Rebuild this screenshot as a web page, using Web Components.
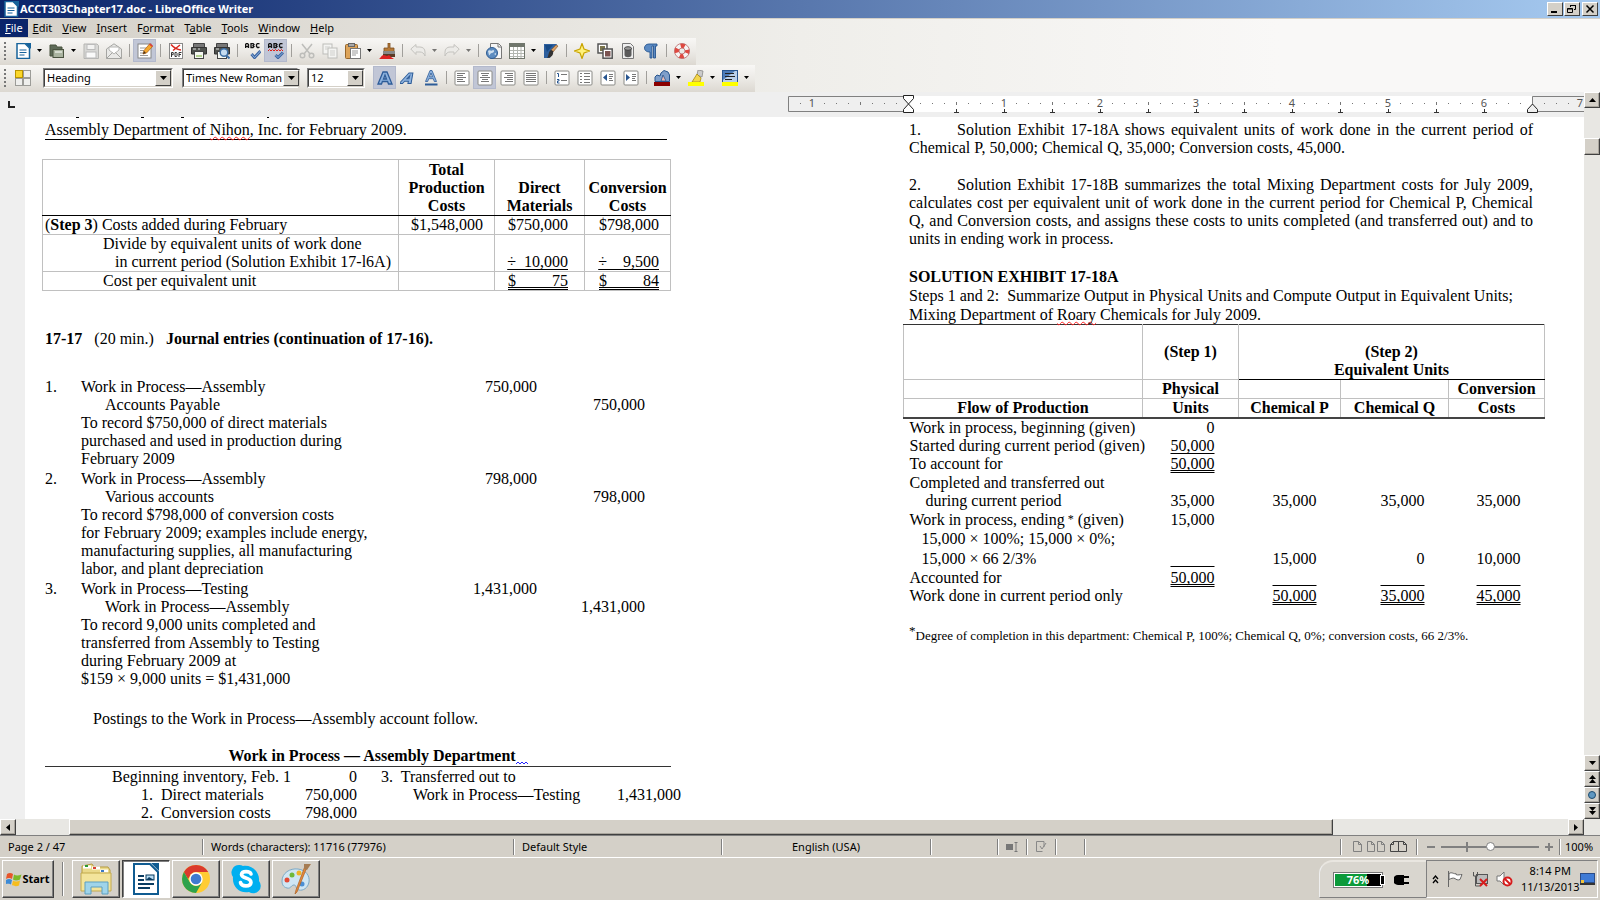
<!DOCTYPE html>
<html lang="en">
<head>
<meta charset="utf-8">
<title>ACCT303Chapter17.doc - LibreOffice Writer</title>
<style>
html,body{height:100%;margin:0}
body{font:11px/14px "Noto Sans","Open Sans",sans-serif;color:#000;overflow:hidden}
</style>
</head>
<body>
<writer-app></writer-app>
<script>
const define=(name,html,setup)=>{
  const t=document.createElement('template');
  t.innerHTML=html;
  customElements.define(name,class extends HTMLElement{
    constructor(){super();this.attachShadow({mode:'open'}).append(t.content.cloneNode(true));}
    connectedCallback(){if(setup&&!this.ready){this.ready=true;setup(this,this.shadowRoot);}}
  });
};

/* ---------- icons, all on a 16 x 16 grid ---------- */
const box='<rect x="1" y="1" width="14" height="14" rx="1" fill="#fff" stroke="#8a8a86"/>';
const lines=(a)=>a.map(([x,y,w])=>`<path d="M${x} ${y}.5h${w}" stroke="#777"/>`).join('');
const letterA='M1 14 6 2h4l5 12h-3.500l-.9-2.500H5.400L4.500 14ZM6.500 9h3L8 5Z';
const ICONS={
  doc:'<path d="M2 .5h8L14.500 5v10.500H2Z" fill="#fff" stroke="#17639b" stroke-width="1.500"/><path d="M10 0h6v6Z" fill="#17639b"/><path d="M4.500 7h7M4.500 9.500h7M4.500 12h5" stroke="#17639b" stroke-width="1.200"/>',
  open:'<path d="M1 2h6l1 2h5v9H1Z" fill="#5d6a57" stroke="#49523f"/><rect x="4" y="6.500" width="10.500" height="8" fill="#a9b39f" stroke="#49523f"/><path d="M6 9h7" stroke="#e4e8df" stroke-width="1.500"/>',
  save:'<path d="M1 1h13l1.500 1.500v13H1Z" fill="#d8d8d6" stroke="#b5b5b2"/><rect x="4" y="1.500" width="8" height="5" fill="#f3f3f2" stroke="#bbb"/><rect x="3" y="9" width="10" height="6" fill="#fafafa" stroke="#bbb"/>',
  mail:'<path d="M.5 6 8 .8 15.500 6v9.500H.5Z" fill="#e9e9e7" stroke="#a5a5a2"/><path d="M3 7V4h10v3L8 11Z" fill="#fff" stroke="#b5b5b2"/><path d="m.5 15.500 6-6M15.500 15.500l-6-6" stroke="#a5a5a2" fill="none"/>',
  edit:'<rect x="1" y="1" width="13" height="14" fill="#fff" stroke="#888"/><path d="M3 5h6M3 7.500h4M3 10h3M3 12.500h8" stroke="#999"/><path d="m6 11 1-3.500L12.500 1 15.500 3.500 9.500 10Z" fill="#f4a72d" stroke="#b3671a" stroke-width=".8"/><path d="m6 11 1-3 2 2Z" fill="#4a3420"/><path d="m12 1.500 1.200-1.200 2.800 2.400-1 1.200Z" fill="#d8413a"/>',
  pdf:'<rect x="1.500" y=".5" width="13" height="15" fill="#fff" stroke="#888"/><path d="M3 1.500C6 5 9 6.500 13 7M12 2 5 7.500" stroke="#d9281e" stroke-width="1.500" fill="none"/><path d="M3.500 14V9.500h1.700v2.200H3.500M7 9.500v4h1.500l.5-.8V10.300l-.5-.8ZM11 14V9.500h2.500M11 11.500h2" stroke="#333" fill="none"/>',
  print:'<path d="M2.500.5h11v4h-11Z" fill="#777" stroke="#444"/><path d="M.5 4.500h15v6.500H.5Z" fill="#4f524e" stroke="#333"/><path d="M2 6h3M7 6h2" stroke="#ddd"/><rect x="3.500" y="8.500" width="9" height="7" fill="#f5f8f2" stroke="#444"/><path d="M5 13h6" stroke="#b2d08e" stroke-width="2"/>',
  preview:'<path d="M2.500.5h11v4h-11Z" fill="#777" stroke="#444"/><path d="M.5 4.500h15v6.500H.5Z" fill="#4f524e" stroke="#333"/><path d="M2 6h3" stroke="#ddd"/><rect x="3.500" y="8.500" width="9" height="7" fill="#f5f8f2" stroke="#444"/><circle cx="10" cy="9.500" r="3.800" fill="#c5dcf0" stroke="#3e6fa5" stroke-width="1.500"/><path d="m12.500 12.500 3 3" stroke="#3e6fa5" stroke-width="2"/>',
  spell:'<g fill="none" stroke="#111" stroke-width="1.300"><path d="M.5 5V1.500L1.500.5h1l1 1V5M.5 3.500h3M6 4.500v-4h2l1 1-1 1 1 1-1 1ZM14.500 1l-1-.5h-1l-1 1v2l1 1h1l1-.5"/></g><path d="m6.500 11 3 3.500L15.500 8" fill="none" stroke="#3b64a2" stroke-width="3"/><path d="m6.500 11 3 3.500L15.500 8" fill="none" stroke="#8fb4de"/>',
  autospell:'<g fill="none" stroke="#111" stroke-width="1.300"><path d="M.5 5V1.500L1.500.5h1l1 1V5M.5 3.500h3M6 4.500v-4h2l1 1-1 1 1 1-1 1ZM14.500 1l-1-.5h-1l-1 1v2l1 1h1l1-.5"/></g><path d="m0 8 1.500-1.500L3 8l1.500-1.500L6 8l1.500-1.500L9 8l1.500-1.500L12 8l1.500-1.500L15 8" fill="none" stroke="#e0201b"/><path d="m7.500 12 2.500 2.500L15 9.500" fill="none" stroke="#3b64a2" stroke-width="3"/><path d="m7.500 12 2.500 2.500L15 9.500" fill="none" stroke="#8fb4de"/>',
  cut:'<g fill="none" stroke="#bdbdba" stroke-width="1.500"><path d="M3 1 11 11M13 1 5 11"/><circle cx="3.500" cy="12.500" r="2.300"/><circle cx="12.500" cy="12.500" r="2.300"/></g>',
  copy:'<g fill="#f4f4f2" stroke="#bdbdba"><rect x="1" y="1" width="9" height="10"/><rect x="6" y="5" width="9" height="10"/></g><path d="M3 4h5M3 6h3M8 8h5M8 10h5M8 12h5" stroke="#cfcfcc"/>',
  paste:'<rect x=".5" y="1.500" width="12" height="14" rx="1" fill="#dda45a" stroke="#96662c"/><rect x="3.500" y=".5" width="6" height="3" fill="#aaa" stroke="#666"/><rect x="5.500" y="5.500" width="10" height="10" fill="#fff" stroke="#777"/><path d="M7 8h6M7 10h6M7 12h4" stroke="#999"/>',
  brush:'<path d="M9 0h2v5h4v4H5V5h4Z" fill="#b57936" stroke="#7d4f20" stroke-width=".8"/><rect x="4" y="8" width="12" height="3" fill="#888"/><path d="M4 11h12v3H4Z" fill="#5a3a25"/><path d="M0 16c2-1 2-4 5-4l3 1 2-1 2 2 3 2Z" fill="#d22"/>',
  undo:'<path d="M.8 6 6 1.500V4h4c3 0 5 2 5 5v4c-1-3-3-4-5-4H6v2.500Z" fill="#ecebe8" stroke="#c4c3bf"/>',
  redo:'<path d="M15.200 6 10 1.500V4H6C3 4 1 6 1 9v4c1-3 3-4 5-4h4v2.500Z" fill="#ecebe8" stroke="#c4c3bf"/>',
  link:'<path d="M4.500.5h8l3 3v12h-11Z" fill="#f6f6f6" stroke="#777"/><path d="M12 1v3h3" fill="none" stroke="#777"/><circle cx="6" cy="10" r="5.500" fill="#5d8cc0" stroke="#2f5c93"/><path d="M2 8c2-2 3 1 5-1 2 0 1 3-1 3s-2 3-3 2ZM8 11l2-1v2Z" fill="#cfe0f0"/>',
  table:'<rect x=".5" y=".5" width="15" height="15" fill="#fff" stroke="#70766c"/><path d="M.5 1h15v3H.5Z" fill="#70766c"/><path d="M1 7.500h14M1 10.500h14M1 13.500h14M4.500 4v11M8.500 4v11M12 4v11" stroke="#b4b7b1"/>',
  draw:'<path d="M1 1h13L7 15H1Z" fill="#2d5f9e"/><path d="M2 2h8L4 9Z" fill="#174a86"/><path d="m15 3-5 6-2-2 5-5Z" fill="#d7a067" stroke="#8a5c30" stroke-width=".7"/><path d="M10 8c1 4-2 7-6 7 2-2 1-6 4-8Z" fill="#333"/>',
  star:'<path d="m8 .5 2 5.500 5.500 2L10 10l-2 5.500L6 10 .5 8 6 6Z" fill="#fff27d" stroke="#c9a400" stroke-width="1.200"/>',
  gallery:'<rect x="1" y="1" width="9" height="9" fill="#fff" stroke="#555" stroke-width="1.500"/><rect x="3" y="3" width="5" height="5" fill="#7a7449"/><rect x="6" y="6" width="9.200" height="9.200" fill="#fff" stroke="#555" stroke-width="1.500"/><rect x="8" y="8" width="5.500" height="5.500" fill="#7b5350"/>',
  data:'<path d="M2.500.5h8l3 3v12h-11Z" fill="#eee" stroke="#777"/><path d="M4.500 5v7c0 3 7 3 7 0V5Z" fill="#5b5b5b"/><ellipse cx="8" cy="5.500" rx="3.500" ry="1.800" fill="#999" stroke="#444"/>',
  pilcrow:'<path d="M14 1v2h-1.500v12h-2V3H9v12H7V9C3 9 1.500 7 1.500 5S3 1 6 1Z" fill="#5b8ac3" stroke="#27558f" stroke-width=".9"/>',
  help:'<circle cx="8" cy="8" r="5.300" fill="none" stroke="#f4f4f4" stroke-width="4.500"/><circle cx="8" cy="8" r="5.300" fill="none" stroke="#e0483f" stroke-width="4.500" stroke-dasharray="4.160" stroke-dashoffset="2"/><circle cx="8" cy="8" r="7.500" fill="none" stroke="#b66" stroke-width=".8"/><circle cx="8" cy="8" r="3" fill="none" stroke="#b66" stroke-width=".8"/>',
  styles:'<g fill="#efefed" stroke="#9c9c98"><rect x=".5" y=".5" width="7" height="7" fill="#fbd72b" stroke="#b99400"/><rect x="8.500" y=".5" width="7" height="7"/><rect x=".5" y="8.500" width="7" height="7"/><rect x="8.500" y="8.500" width="7" height="7"/></g>',
  bold:`<path d="${letterA}" fill="#8db2de" stroke="#2d5c98" stroke-width="1.300"/>`,
  italic:`<path transform="translate(4 0) skewX(-20)" d="M0 13.500 6 3h4l2 10.500H8.800l-.3-2.300H4.700L3.500 13.500ZM6 8.800h2.200L7.800 5.500Z" fill="#8db2de" stroke="#2d5c98"/>`,
  under:'<path d="m2.500 11.500 4.500-11h2l4.500 11h-2.200l-1-2.800H5.700l-1 2.800ZM6.500 6.800h3L8 3Z" fill="#8db2de" stroke="#2d5c98" stroke-width=".8"/><path d="M2 14.500h12.500" stroke="#2d5c98" stroke-width="2"/>',
  left:box+lines([[3,3,8],[3,5,6],[3,7,9],[3,9,6],[3,11,8]]),
  center:box+lines([[4,3,8],[5,5,6],[3,7,10],[5,9,6],[4,11,8]]),
  right:box+lines([[5,3,8],[7,5,6],[4,7,9],[7,9,6],[5,11,8]]),
  justify:box+lines([[3,3,10],[3,5,10],[3,7,10],[3,9,10],[3,11,10]]),
  numbers:box+'<path d="M3 3.500h1.500V7M3 9.500h2v1.500H3.500v2H5.500" fill="none" stroke="#27558f"/>'+lines([[7,4,6],[7,10,6]]),
  bullets:box+'<path d="M3 3.500h2M3 6.500h2M3 9.500h2M3 12.500h2" stroke="#777"/>'+lines([[7,3,6],[7,6,6],[7,9,6],[7,12,6]]),
  outdent:box+'<path d="M7 4v7L3 7.500Z" fill="#27558f"/>'+lines([[9,4,4],[9,6,4],[9,8,3],[9,10,4]]),
  indent:box+'<path d="M3 4v7l4-3.500Z" fill="#27558f"/>'+lines([[9,4,4],[9,6,4],[9,8,3],[9,10,4]]),
  color:'<path d="M1 11.500V7l2-2 3 1 1-3 3-2.500 4 1.500 1.500 3v6.500Z" fill="#7f9fca" stroke="#27558f"/><path d="m7 11 2-6 3 6Z" fill="#e9b9b2" stroke="#27558f" stroke-width=".8"/><path d="M0 12h16v4H0Z" fill="#8b0000"/>',
  mark:'<path d="m10 0 5 1-1 6-5-2Z" fill="#ccc" stroke="#888" stroke-width=".8"/><path d="m9 4 4 4-1 4H4Z" fill="#f3d54d" stroke="#a88a10" stroke-width=".8"/><path d="M0 12h16v4H0Z" fill="#ff0"/>',
  back:'<rect x=".5" y=".5" width="15" height="12" fill="#b9d0ea" stroke="#27558f"/><path d="M1 1h12L1 10Z" fill="#4d7cb8"/><path d="M3 3.500h9M3 6.500h10M3 9.500h7" stroke="#222"/><path d="M0 12h16v4H0Z" fill="#ff0"/>'
};
const svg=(n,s=16)=>`<svg width="${s}" height="${s}" viewBox="0 0 16 16" aria-hidden="true">${ICONS[n]}</svg>`;

/* ---------- title bar ---------- */
define('title-bar',`<style>
:host{display:flex;align-items:center;height:18px;padding:0 2px 0 3px;gap:1px;background:linear-gradient(90deg,#0a246a,#a6caf0);border-bottom:1px solid #d4d0c8;color:#fff}
svg{flex:none}
h1{flex:1;margin:0;font-size:11px;line-height:18px;font-weight:700}
button{box-sizing:border-box;width:16px;height:14px;padding:0;border:1px solid;border-color:#fff #404040 #404040 #fff;background:#d4d0c8;display:grid;place-items:center}
button:last-child{margin-left:1px}
</style>${svg('doc')}<h1><slot></slot></h1>
<button aria-label="Minimize"><svg width="10" height="10"><path d="M1 8h6" stroke="#000" stroke-width="2"/></svg></button>
<button aria-label="Restore"><svg width="10" height="10" fill="none" stroke="#000"><path d="M3.500 3V1.500h5v4H7M3 1.500h6M.5 4.500h5v4h-5ZM.5 5h5"/></svg></button>
<button aria-label="Close"><svg width="10" height="10"><path d="m1.500 1.500 7 7m0-7-7 7" stroke="#000" stroke-width="1.500"/></svg></button>`);

/* ---------- menu ---------- */
define('menu-bar',`<style>
:host{display:block}
nav{display:flex;height:19px}
button{font:inherit;font-size:11px;line-height:18px;height:18px;padding:0 5px;border:0;background:none;color:#000}
button:first-child{background:#0a246a;color:#fff}
u{text-underline-offset:1px}
</style><nav><button><u>F</u>ile</button><button><u>E</u>dit</button><button><u>V</u>iew</button><button><u>I</u>nsert</button><button>F<u>o</u>rmat</button><button>T<u>a</u>ble</button><button><u>T</u>ools</button><button><u>W</u>indow</button><button><u>H</u>elp</button></nav>`);

/* ---------- tool bars ---------- */
define('tool-bar',`<style>
:host{display:flex;width:max-content;align-items:center;height:27px;box-sizing:border-box;padding:0 3px 2px 0;background:linear-gradient(#f8f7f5,#eceae6 50%,#dcd8d1)}
i{width:2px;height:18px;margin:0 5px 0 4px;background:repeating-linear-gradient(#777 0 2px,transparent 2px 4px)}
</style><i></i><slot></slot>`);
define('tool-sep',`<style>:host{width:8px;display:flex;justify-content:center}i{width:1px;height:13px;background:#a19f9b}</style><i></i>`);
define('tool-button',`<style>
:host{display:flex;height:23px}
button{box-sizing:border-box;padding:0;border:0;background:none;display:grid;place-items:center}
.main{width:23px;height:23px}
.more{width:11px;display:none}
:host([pressed]) .main{background:#c1c6d6;border:1px solid #b3b9cc}
:host([menu]) .more{display:grid}
:host([off]) .more{opacity:.5}
</style><button class="main"></button><button class="more" aria-label="More"><svg width="7" height="4"><path d="M1 0h5L3.500 3Z"/></svg></button>`,
(el,root)=>{const b=root.querySelector('.main');b.innerHTML=svg(el.getAttribute('icon'));b.setAttribute('aria-label',el.getAttribute('icon'));});
define('tool-select',`<style>
:host{display:flex;box-sizing:border-box;height:20px;border:1px solid;border-color:#808080 #fff #fff #808080}
label{flex:1;display:flex;position:relative;border:1px solid;border-color:#404040 #d4d0c8 #d4d0c8 #404040}
select{flex:1;min-width:0;appearance:none;border:0;border-radius:0;padding:0 16px 0 2px;background:#fff;font:inherit;font-size:11px;color:#000;outline:0}
span{position:absolute;right:0;top:0;bottom:0;width:14px;border:1px solid;border-color:#fff #404040 #404040 #fff;background:#d4d0c8;display:grid;place-items:center;pointer-events:none}
</style><label><select><option></option></select><span><svg width="7" height="4"><path d="M0 0h7L3.500 4Z"/></svg></span></label>`,
(el,root)=>{root.querySelector('option').textContent=el.getAttribute('value');root.querySelector('select').setAttribute('aria-label',el.getAttribute('label'));});

const T=(s)=>s.split(' ').map(w=>w==='|'?'<tool-sep></tool-sep>':`<tool-button icon="${w.replace(/[*+-]/g,'')}"${w.includes('*')?' pressed':''}${w.includes('+')?' menu':''}${w.includes('-')?' off':''}></tool-button>`).join('');
define('writer-tools',`<style>
:host{display:block;background:linear-gradient(90deg,#d4d0c8,#efeeea 50%,#f9f8f7 80%)}
.style{width:130px;margin:0 9px}.font{width:116px;margin-right:9px}.size{width:58px;margin-right:8px}
</style><menu-bar></menu-bar>
<tool-bar>${T('doc+ open+ save mail | edit* | pdf print preview | spell autospell* | cut copy paste+ brush | undo+- redo+- | link table+ draw | star gallery data pilcrow | help')}</tool-bar>
<tool-bar>${T('styles')}<tool-select class="style" label="Paragraph style" value="Heading"></tool-select><tool-select class="font" label="Font name" value="Times New Roman"></tool-select><tool-select class="size" label="Font size" value="12"></tool-select>${T('bold* italic under | left center* right justify | numbers bullets outdent indent | color+ mark+ back+')}</tool-bar>`);

/* ---------- ruler: one inch is 96px ---------- */
define('page-ruler',`<style>
:host{display:flex;height:25px;background:#efefef;overflow:hidden}
.corner{flex:0 0 788px;box-sizing:border-box;padding:9px 0 0 8px}
.scale{flex:1;min-width:0;overflow:hidden}
svg{display:block}
text{font-size:11px;fill:#555;text-anchor:middle}
</style><div class="corner"><svg width="8" height="8"><path d="M1 0v6h6" fill="none" stroke="#222" stroke-width="2"/></svg></div><div class="scale"></div>`,
(el,root)=>{
  let s='<rect x="120" y="4" width="624" height="16" fill="#fff"/><path d="M120 4.500H.5v15H120M744.500 20V4.500H900M744.500 19.500H900" fill="none" stroke="#808080"/>';
  for(let i=-9;i<=60;i++){
    const x=120+i*12;
    if(i===0||i===52)continue;
    if(i%8===0)s+=`<text x="${x}" y="15">${Math.abs(i/8)}</text>`;
    else if(i%4===0)s+=`<path d="M${x}.5 10v3" stroke="#777"/>`;
    else s+=`<rect x="${x}" y="11" width="1" height="1" fill="#777"/>`;
    if(i>0&&i<52&&i%4===0)s+=`<path d="M${x}.5 17v3M${x-2} 20.500h5" stroke="#333"/>`;
  }
  s+='<g fill="#fff" stroke="#222"><path d="M115.500 3.500h10v3l-5 5.500-5-5.500ZM115.500 20.500h10v-3l-5-5.500-5 5.500Z"/><path d="M739.500 20.500h10v-3l-5-5.500-5 5.500Z" fill="#efefef"/></g>';
  root.querySelector('.scale').innerHTML=`<svg width="900" height="25">${s}</svg>`;
});

/* ---------- scroll bars ---------- */
const btn='box-sizing:border-box;padding:0;border:1px solid;border-color:#fff #404040 #404040 #fff;background:#d4d0c8;display:grid;place-items:center;box-shadow:inset -1px -1px #a9a59d;';
define('scroll-y',`<style>
:host{display:flex;flex-direction:column;width:16px;background:#e8e7e3}
button{${btn}width:16px;height:16px}
.a{flex:30}.b{flex:602}.thumb{${btn}height:17px}
</style><button aria-label="Up"><svg width="7" height="4"><path d="M0 4h7L3.500 0Z"/></svg></button><div class="a"></div><div class="thumb"></div><div class="b"></div>
<button aria-label="Down"><svg width="7" height="4"><path d="M0 0h7L3.500 4Z"/></svg></button>
<button aria-label="Previous page"><svg width="7" height="8"><path d="M0 4h7L3.500 0ZM0 8h7L3.500 4Z"/></svg></button>
<button aria-label="Navigation"><svg width="10" height="10"><circle cx="5" cy="5" r="3.500" fill="#5f97c0" stroke="#1d4c70"/></svg></button>
<button aria-label="Next page"><svg width="7" height="8"><path d="M0 0h7L3.500 4ZM0 4h7L3.500 8Z"/></svg></button>`);
define('scroll-x',`<style>
:host{display:flex;height:16px;padding-right:16px;background:#e8e7e3;border-bottom:1px solid #808080}
button{${btn}width:16px;height:16px}
.a{flex:53}.thumb{${btn}flex:1265}.b{flex:235}
</style><button aria-label="Left"><svg width="4" height="7"><path d="M4 0v7L0 3.500Z"/></svg></button><div class="a"></div><div class="thumb"></div><div class="b"></div><button aria-label="Right"><svg width="4" height="7"><path d="M0 0v7l4-3.500Z"/></svg></button>`);

/* ---------- document ---------- */
const serif='font-family:"Liberation Serif","Times New Roman",serif;font-size:16px;line-height:18px;';
const deco='.u{text-decoration:underline 1px;text-underline-offset:2px;white-space:pre}.d{text-decoration:underline double 1px;text-underline-offset:1px;text-decoration-skip-ink:none;white-space:pre}';
define('cost-table',`<style>
:host{display:block;margin:19px 0 0 -3px}
table{border-collapse:collapse;table-layout:fixed;width:628px}
td,th{border:1px solid #c0c0c0;padding:0;vertical-align:bottom;line-height:18px}
th{border-bottom-color:#000;padding-top:1px}
td:first-child{padding-left:2px}
td:nth-child(2){text-align:right;padding-right:11px}td:nth-child(3){text-align:right;padding-right:16px}td:nth-child(4){text-align:right;padding-right:11px}
p{margin:0 0 0 58px}p+p{margin-left:70px}
.c1{width:356px}.c2{width:96px}.c3{width:90px}.c4{width:86px}
${deco}</style><table><colgroup><col class="c1"><col class="c2"><col class="c3"><col class="c4"></colgroup>
<tr><th></th><th>Total<br>Production<br>Costs</th><th>Direct<br>Materials</th><th>Conversion<br>Costs</th></tr>
<tr><td>(<b>Step 3</b>) Costs added during February</td><td>$1,548,000</td><td>$750,000</td><td>$798,000</td></tr>
<tr><td><p>Divide by equivalent units of work done</p><p>in current period (Solution Exhibit 17-l6A)</p></td><td></td><td><span class="u">÷  10,000</span></td><td><span class="u">÷    9,500</span></td></tr>
<tr><td><p>Cost per equivalent unit</p></td><td></td><td><span class="d">$         75</span></td><td><span class="d">$         84</span></td></tr></table>`);

const entry=(n,a,b,v,note)=>`<tbody><tr><td>${n}.</td><td>${a}</td><td>${v}</td><td></td></tr><tr><td></td><td class="cr">${b}</td><td></td><td>${v}</td></tr><tr><td></td><td class="note">${note}</td><td></td><td></td></tr></tbody>`;
define('journal-entries',`<style>
:host{display:block;margin-top:29px}
table{border-collapse:collapse;table-layout:fixed;width:600px}
td{padding:0;vertical-align:top}
tr:first-child td{line-height:19px}
td:nth-child(n+3){text-align:right}
.cr{padding-left:24px}.note{padding-bottom:1px}tbody:last-child .note{padding-bottom:4px}
.c1{width:36px}.c2{width:336px}.c3{width:120px}.c4{width:108px}
</style><table><colgroup><col class="c1"><col class="c2"><col class="c3"><col class="c4"></colgroup>
${entry(1,'Work in Process—Assembly','Accounts Payable','750,000','To record $750,000 of direct materials<br>purchased and used in production during<br>February 2009')}
${entry(2,'Work in Process—Assembly','Various accounts','798,000','To record $798,000 of conversion costs<br>for February 2009; examples include energy,<br>manufacturing supplies, all manufacturing<br>labor, and plant depreciation')}
${entry(3,'Work in Process—Testing','Work in Process—Assembly','1,431,000','To record 9,000 units completed and<br>transferred from Assembly to Testing<br>during February 2009 at<br>$159 × 9,000 units = $1,431,000')}</table>`);

define('t-account',`<style>
:host{display:block;margin-top:19px}
table{border-collapse:collapse;table-layout:fixed;width:636px}
caption{width:626px;box-sizing:border-box;padding-left:40px;font-weight:700;text-align:center;border-bottom:1px solid #333}
caption svg{vertical-align:-5px}
td{padding:0;white-space:pre}
tr:first-child td{padding-top:1px}
td:first-child{padding-left:96px}tr:first-child td:first-child{padding-left:67px}
td:nth-child(even){text-align:right}
td:nth-child(3){padding-left:56px}tr:first-child td:nth-child(3){padding-left:24px}
.c1{width:248px}.c2{width:64px}.c3{width:244px}.c4{width:80px}
</style><table><caption>Work in Process — Assembly Department<svg width="12" height="5"><path d="M0 3 2 1l2 2 2-2 2 2 2-2 2 2" fill="none" stroke="#22f"/></svg></caption><colgroup><col class="c1"><col class="c2"><col class="c3"><col class="c4"></colgroup>
<tr><td>Beginning inventory, Feb. 1</td><td>0</td><td>3.  Transferred out to</td><td></td></tr>
<tr><td>1.  Direct materials</td><td>750,000</td><td>Work in Process—Testing</td><td>1,431,000</td></tr>
<tr><td>2.  Conversion costs</td><td>798,000</td><td></td><td></td></tr></table>`);

const wavy='.w{text-decoration:underline wavy #f22 1px;text-underline-offset:1px;text-decoration-skip-ink:none}';
define('left-page',`<style>
:host{display:block;${serif}box-sizing:border-box;padding:4px 0 0 20px;background:linear-gradient(#000,#000) 51px 0/3px 1px no-repeat,linear-gradient(#000,#000) 116px 0/3px 1px no-repeat,linear-gradient(#000,#000) 156px 0/3px 1px no-repeat,linear-gradient(#000,#000) 242px 0/2px 1px no-repeat,#fff}
p{margin:0}.title{width:622px;border-bottom:1px solid #000}
h2{margin:39px 0 0;font-size:16px;white-space:pre}h2 span{font-weight:400}
.post{margin:18px 0 0 48px}
${wavy}</style><p class="title">Assembly Department of <span class="w">Nihon</span>, Inc. for February 2009.</p>
<cost-table></cost-table>
<h2>17-17  <span> (20 min.)  </span> Journal entries (continuation of 17-16).</h2>
<journal-entries></journal-entries>
<p class="post">Postings to the Work in Process—Assembly account follow.</p>
<t-account></t-account>`);

const blank='<span class="u">&nbsp;&nbsp;&nbsp;&nbsp;&nbsp;&nbsp;&nbsp;&nbsp;&nbsp;&nbsp;&nbsp;</span>';
const row=(h,c,label,...v)=>`<tr class="${h}"><td class="${c}">${label}</td>${[0,1,2,3].map(i=>{const x=v[i]||'';return `<td>${x==='_'?blank:x.replace(/^([ud]):(.*)/,'<span class="$1">$2</span>')}</td>`;}).join('')}</tr>`;
define('flow-table',`<style>
:host{display:block;margin-left:-6px}
table{border-collapse:collapse;table-layout:fixed;width:642px}
th{border:1px solid #c0c0c0;padding:0;vertical-align:bottom;line-height:18px}
td{padding:0 24px 0 0;text-align:right;vertical-align:middle;white-space:nowrap;height:18px}
td:first-child{padding:0 0 0 6px;text-align:left}
.step th:first-child,.step th:nth-child(2),.step th:nth-child(3){border-top-color:#333}
.step th{height:54px}.step .mid{vertical-align:middle}.step .eq{border-bottom-color:#000}
.last th{border-bottom:2px solid #444}
.m td{height:19px}.l td{height:20px}
td.i1{padding-left:18px}td.i2{padding-left:22px}
sup{font-size:12px;line-height:0;vertical-align:2px}
.c1{width:239px}.c2{width:96px}.c3{width:102px}.c4{width:108px}.c5{width:96px}
${deco}</style><table><colgroup><col class="c1"><col class="c2"><col class="c3"><col class="c4"><col class="c5"></colgroup><thead>
<tr class="step"><th></th><th class="mid">(Step 1)</th><th class="eq" colspan="3">(Step 2)<br>Equivalent Units</th></tr>
<tr><th></th><th>Physical</th><th></th><th></th><th>Conversion</th></tr>
<tr class="last"><th>Flow of Production</th><th>Units</th><th>Chemical P</th><th>Chemical Q</th><th>Costs</th></tr></thead><tbody>
${row('','','Work in process, beginning (given)','0')}
${row('','','Started during current period (given)','u:50,000')}
${row('','','To account for','d:50,000')}
${row('m','','Completed and transferred out')}
${row('','i2','during current period','35,000','35,000','35,000','35,000')}
${row('m','','Work in process, ending<sup> *</sup> (given)','15,000')}
${row('l','i1','15,000 × 100%; 15,000 × 0%;')}
${row('l','i1','15,000 × 66 2/3%','_','15,000','0','10,000')}
${row('','','Accounted for','d:50,000','_','_','_')}
${row('','','Work done in current period only','','d:50,000','d:35,000','d:45,000')}
</tbody></table>`);
define('right-page',`<style>
:host{display:block;${serif}box-sizing:border-box;padding:4px 0 0 96px;background:#fff}
p,h2{margin:0 0 19px;width:624px;text-align:justify;font-size:16px}
p span.n{display:inline-block;width:48px;text-align:left}
h2{margin:20px 0 0}.steps{text-align:left;margin:0;white-space:pre-wrap;line-height:19px}
.foot{margin-top:22px;font-size:13px;line-height:18px;text-align:left}
sup{font-size:13px;line-height:0}
${wavy}</style><p><span class="n">1.</span>Solution Exhibit 17-18A shows equivalent units of work done in the current period of Chemical P, 50,000; Chemical Q, 35,000; Conversion costs, 45,000.</p>
<p><span class="n">2.</span>Solution Exhibit 17-18B summarizes the total Mixing Department costs for July 2009, calculates cost per equivalent unit of work done in the current period for Chemical P, Chemical Q, and Conversion costs, and assigns these costs to units completed (and transferred out) and to units in ending work in process.</p>
<h2>SOLUTION EXHIBIT 17-18A</h2>
<p class="steps">Steps 1 and 2:  Summarize Output in Physical Units and Compute Output in Equivalent Units;
Mixing Department of <span class="w">Roary</span> Chemicals for July 2009.</p>
<flow-table></flow-table>
<p class="foot"><sup>*</sup>Degree of completion in this department: Chemical P, 100%; Chemical Q, 0%; conversion costs, 66 2/3%.</p>`);

/* ---------- status bar ---------- */
define('status-bar',`<style>
:host{display:flex;height:21px;align-items:center;background:#d4d0c8;border-bottom:1px solid #fff}
div{box-sizing:border-box;height:16px;line-height:16px;border-right:1px solid #808080;box-shadow:1px 0 #fff;padding-left:8px;white-space:nowrap;display:flex;align-items:center;flex:none}
.p{width:203px}.w{width:311px}.s{width:208px}.l{width:209px;justify-content:center;padding:0}.a{width:67px}.i{width:29px;justify-content:center;padding:0}.g{flex:1}.v{width:76px;padding-left:12px;gap:5px}.z{width:143px;gap:5px;padding-left:9px}.c{border:0;width:40px;padding-left:5px;box-shadow:none}
button{padding:0;border:0;background:none;display:flex}
input{appearance:none;flex:none;width:98px;height:16px;margin:0;background:linear-gradient(#808080,#808080) 0 50%/100% 2px no-repeat,linear-gradient(#808080,#808080) 25px 50%/2px 10px no-repeat}
input::-webkit-slider-thumb{appearance:none;width:9px;height:9px;border:1px solid #808080;border-radius:50%;background:#fff}
</style><div class="p">Page 2 / 47</div><div class="w">Words (characters): 11716 (77976)</div><div class="s">Default Style</div><div class="l">English (USA)</div><div class="a"></div>
<div class="i"><svg width="14" height="12" fill="#777"><path d="M1 3h7v6H1Z"/><path d="M9.500 1.500h3M11 2v8M9.500 10.500h3" stroke="#777" fill="none"/></svg></div>
<div class="i"><svg width="12" height="13" fill="none" stroke="#888"><path d="M9 7V1.500H1.500v10h6M5 6l2 3 4-6"/></svg></div><div class="i"></div><div class="g"></div>
<div class="v"><button aria-label="Single page"><svg width="9" height="11" fill="none" stroke="#808080"><path d="M.5.5h5l3 3v7h-8ZM5.500.5v3h3"/></svg></button><button aria-label="Two pages"><svg width="18" height="11" fill="none" stroke="#808080"><path d="M.5.5h4l3 3v7h-7ZM4.500.5v3h3M10.500.5h4l3 3v7h-7ZM14.500.5v3h3"/></svg></button><button aria-label="Book view"><svg width="17" height="11" fill="none" stroke="#444"><path d="M8.500.5h-5l-3 3v7h8ZM3.500.5v3h-3M8.500.5h5l3 3v7h-8ZM13.500.5v3h3"/></svg></button></div>
<div class="z"><button aria-label="Zoom out"><svg width="10" height="10"><path d="M1 5h8" stroke="#808080" stroke-width="2"/></svg></button><input type="range" aria-label="Zoom" min="0" max="100" value="50"><button aria-label="Zoom in"><svg width="10" height="10"><path d="M1 5h8M5 1v8" stroke="#808080" stroke-width="2"/></svg></button></div><div class="c">100%</div>`);

/* ---------- task bar ---------- */
define('task-bar',`<style>
:host{display:flex;height:42px;box-sizing:border-box;padding:2px;background:#d4d0c8}
button{font:inherit;padding:0;border:1px solid;border-color:#fff #404040 #404040 #fff;background:#d4d0c8;box-shadow:inset -1px -1px #808080;display:flex;align-items:center;justify-content:center;flex:none;box-sizing:border-box}
.start{width:52px;font-size:11px;font-weight:700}
.bar{width:1px;margin:2px 9px 2px 8px;background:#808080;box-shadow:1px 0 #fff}
.apps{display:flex;gap:2px;flex:1}.apps button{width:48px}
.apps .on{background:#fff;border-color:#404040 #fff #fff #404040;box-shadow:inset 1px 1px #808080}
.power{display:flex;align-items:center;gap:12px;padding-left:14px;width:92px;border-top:2px solid #e9e6e0;border-left:1px solid #eee;border-bottom:1px solid #808080;border-top-left-radius:14px;background:#d9d6cf}
.cell{position:relative;width:46px;height:12px;border:1px solid #fff;outline:1px solid #777;background:linear-gradient(90deg,#0c9a3a 70%,#000 70%);color:#fff;font-weight:700;font-size:11px;line-height:12px;text-align:center}
.cell::after{content:"";position:absolute;left:100%;top:2px;width:3px;height:8px;background:#000;outline:1px solid #fff}
.tray{display:flex;align-items:center;border:1px solid;border-color:#808080 #fff #fff #808080;gap:8px;padding:0 1px 0 5px;width:164px}
.clock{font-size:11px;line-height:16px;text-align:center;margin-right:-8px}
svg{flex:none}
</style>
<button class="start"><svg width="16" height="16" viewBox="0 0 16 16"><path d="M1 3c2-1.500 4-1.500 6 0L6 8C4 6.500 2 6.500 0 8Z" fill="#e8552a"/><path d="M8 3.500c2 1.500 5 1 7.500 0L14 8.500c-2 1-5 1.500-7 0Z" fill="#7db928"/><path d="M0 9c2-1.500 4-1.500 6 0l-1 4.500C3.500 12-1 13-1 13.500Z" fill="#3c8ad6"/><path d="M7 9.500c2 1.500 5 1 7 0l-1 5c-2 1-5 1-7-.5Z" fill="#f7bd1d"/></svg>Start</button><div class="bar"></div>
<div class="apps">
<button aria-label="Explorer"><svg width="34" height="34" viewBox="0 0 34 34"><path d="M3 10V4l10-2 2 3h14l2 3v20H3Z" fill="#ead98a" stroke="#b59b3f"/><path d="M4 5h8M13 6h8M21 9h8" stroke="#fff" stroke-width="3"/><path d="M6 4h3" stroke="#2a9a2f" stroke-width="2"/><path d="M14 6h3" stroke="#d84234" stroke-width="2"/><path d="M22 9h3" stroke="#3c79c4" stroke-width="2"/><path d="M2 11h30v18H2Z" fill="#f3e49b" stroke="#c2a94c"/><path d="M6 20h23v12h-6v-7H12v7H6Z" fill="#9fd4ea" stroke="#5d9fc0"/></svg></button>
<button class="on" aria-label="Writer"><svg width="28" height="34" viewBox="0 0 28 34"><path d="M2 2h16l8 8v22H2Z" fill="#fff" stroke="#0f5b91" stroke-width="2"/><path d="M19 1h8v8Z" fill="#0f5b91"/><path d="M6 14h6M6 18h6M6 22h16M6 26h12" stroke="#0b3c61" stroke-width="2"/><rect x="14" y="13" width="8" height="5" fill="#b9dcf2" stroke="#0b3c61"/><path d="m14 18 3-3 5 3Z" fill="#0b3c61"/></svg></button>
<button aria-label="Chrome"><svg width="30" height="30" viewBox="0 0 30 30"><circle cx="15" cy="15" r="14" fill="#fc3"/><path d="M2.900 8A14 14 0 0 1 27.200 8H15a7 7 0 0 0-6.500 4.500L7 15Z" fill="#db3a2c"/><path d="M2.900 8A14 14 0 0 0 15 29l6-10.500a7 7 0 0 1-12 0Z" fill="#2da24c"/><circle cx="15" cy="15" r="6.700" fill="#fff"/><circle cx="15" cy="15" r="5.300" fill="#3f7bd0"/></svg></button>
<button aria-label="Skype"><svg width="30" height="30" viewBox="0 0 30 30"><path d="M8 1a7 7 0 0 1 4 1C21 .5 29 8 28 17a7.500 7.500 0 0 1-10 11C8 30 1 22 2 13A7.500 7.500 0 0 1 8 1Z" fill="#00aff0"/><path d="M20 10c-1-3-9-3.500-9.500.5C10.500 15 20 13 20 18.500c-.5 4.500-9.500 4.500-10.500 0" fill="none" stroke="#fff" stroke-width="3.600" stroke-linecap="round"/></svg></button>
<button aria-label="Paint"><svg width="32" height="32" viewBox="0 0 32 32"><path d="M2 18C2 10 10 5 18 6s12 7 11 13-6 9-10 8-2-5-5-5-3 4-7 3-5-4-5-7Z" fill="#cfe6f4" stroke="#7ea9c4"/><circle cx="7" cy="17" r="2.500" fill="#e34a35"/><circle cx="12" cy="12" r="2.500" fill="#6fb93a"/><circle cx="19" cy="10" r="2.500" fill="#f0b429"/><circle cx="22" cy="21" r="2.500" fill="#4b8fd4"/><path d="M27 4 17 29l-2 2 1-4L25 3Z" fill="#e8893a" stroke="#a75e22" stroke-width=".7"/><path d="M24 1h7l-4 6-3-1Z" fill="#a67c52"/></svg></button>
</div>
<div class="power"><div class="cell">76%</div><svg width="16" height="12" viewBox="0 0 16 12"><path d="M4 1h6v10H4a5 5 0 0 1 0-10M0 5h4v2H0ZM10 2h5v2h-5ZM10 8h5v2h-5Z"/></svg></div>
<div class="tray"><svg width="7" height="9" fill="none" stroke="#000"><path d="m1 4 2.500-3L6 4M1 8l2.500-3L6 8" stroke-width="1.300"/></svg>
<svg width="17" height="16" fill="#fff" stroke="#666"><path d="M1.500 0v16M2 2.500c3-2 5 1 7 0v1c2 1 4 0 6 0l-2 5c-2 1-4 0-5-1-2-1-4 0-6 1Z"/></svg>
<svg width="16" height="16"><rect x="4.500" y="3.500" width="11" height="9" fill="#bbb" stroke="#555"/><path d="M1.500 1v4h4V1M3.500 5v10h5" fill="none" stroke="#555"/><path d="m8 8 7 7m0-7-7 7" stroke="#d61c1c" stroke-width="2"/></svg>
<svg width="17" height="16"><path d="M1 5h3l4-4v13L4 10H1Z" fill="#fff" stroke="#777"/><circle cx="11.500" cy="10.500" r="4" fill="#fff" stroke="#d61c1c" stroke-width="2"/><path d="m9 8 5 5" stroke="#d61c1c" stroke-width="2"/></svg>
<div class="clock">8:14 PM<br>11/13/2013</div>
<svg width="15" height="14"><rect x=".5" y="1.500" width="14" height="9" fill="#3f7bd6" stroke="#2b4c86"/><path d="M0 11h15v2H0Z" fill="#333"/><path d="M1 8h3v3H1Z" fill="#f2c23a"/></svg></div>`);

/* ---------- whole window ---------- */
define('writer-app',`<style>
:host{display:flex;flex-direction:column;height:100vh;overflow:hidden}
title-bar,writer-tools,scroll-x,status-bar,task-bar{flex:none}
.work{flex:1;min-height:0;display:flex}
.view{flex:1;min-width:0;display:flex;flex-direction:column}
page-ruler{flex:none}
.pages{flex:1;min-height:0;display:flex;overflow:hidden;padding-left:25px;background:#efefef}
left-page{flex:0 0 788px}right-page{flex:1;min-width:0}
</style><title-bar>ACCT303Chapter17.doc - LibreOffice Writer</title-bar><writer-tools></writer-tools>
<div class="work"><div class="view"><page-ruler></page-ruler><div class="pages"><left-page></left-page><right-page></right-page></div></div><scroll-y></scroll-y></div>
<scroll-x></scroll-x><status-bar></status-bar><task-bar></task-bar>`);
</script>
</body>
</html>
